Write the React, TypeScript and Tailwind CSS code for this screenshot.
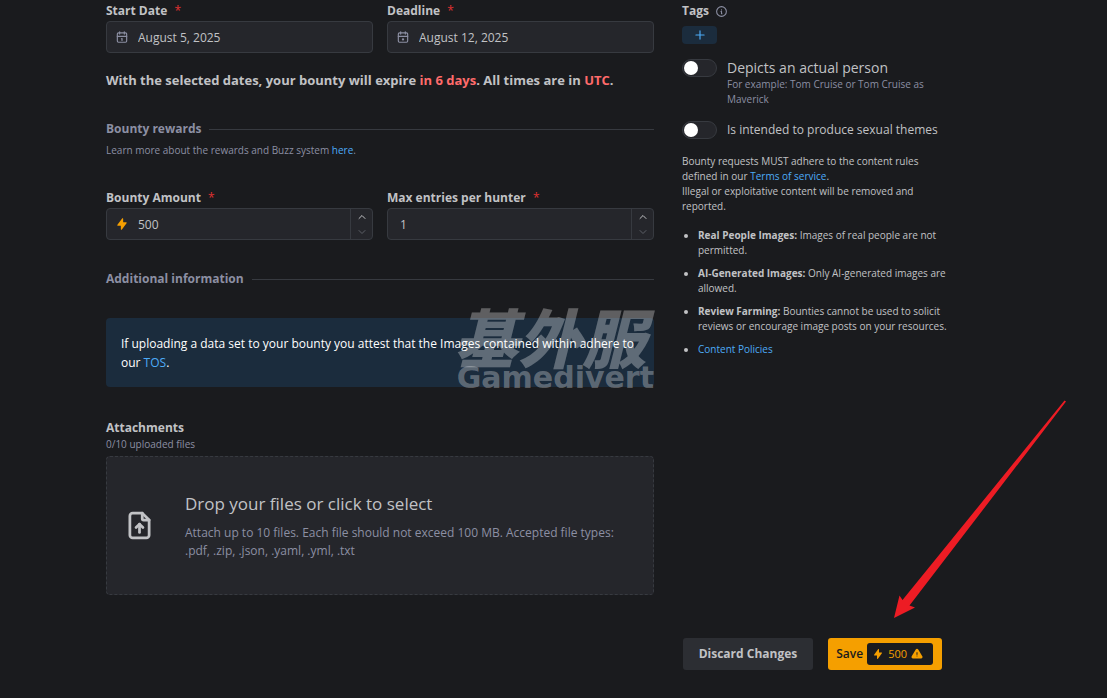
import type { ReactNode } from "react";
import {
  TbAlertTriangleFilled,
  TbBoltFilled,
  TbCalendar,
  TbCalendarDue,
  TbChevronDown,
  TbChevronUp,
  TbFileUpload,
  TbInfoCircle,
  TbPlus,
} from "react-icons/tb";

const rules = [
  {
    title: "Real People Images:",
    text: "Images of real people are not permitted.",
  },
  {
    title: "AI-Generated Images:",
    text: "Only AI-generated images are allowed.",
  },
  {
    title: "Review Farming:",
    text: "Bounties cannot be used to solicit reviews or encourage image posts on your resources.",
  },
];

interface FieldProps {
  id: string;
  label: string;
  value: string;
  icon?: ReactNode;
  stepper?: boolean;
}

const Field = ({ id, label, value, icon, stepper }: FieldProps) => {
  return (
    <div className="min-w-0 flex-1">
      <label htmlFor={id} className="block text-xs leading-5 font-bold">
        {label} <span className="ml-1 font-normal text-[#e03131]">*</span>
      </label>
      <div className="flex h-8 overflow-hidden rounded border border-[#373a40] bg-[#25262b]">
        {icon && (
          <span className="flex w-[31px] items-center justify-center pr-px text-[#8c8fa3]">
            {icon}
          </span>
        )}
        <input
          id={id}
          type="text"
          defaultValue={value}
          className={`min-w-0 flex-1 bg-transparent pt-px text-xs outline-none ${
            icon ? "" : "pl-3"
          }`}
        />
        {stepper && (
          <div className="flex w-[22px] flex-col border-l border-[#373a40]">
            <button
              type="button"
              aria-label={`Increase ${label}`}
              className="flex flex-1 items-center justify-center">
              <TbChevronUp size={12} />
            </button>
            <button
              type="button"
              aria-label={`Decrease ${label}`}
              className="flex flex-1 items-center justify-center text-[#5c5f66]">
              <TbChevronDown size={12} />
            </button>
          </div>
        )}
      </div>
    </div>
  );
};

const Divider = ({ label }: { label: string }) => {
  return (
    <div className="flex items-center gap-2">
      <h2 className="text-xs leading-5 font-bold text-[#8c8fa3]">{label}</h2>
      <div className="h-px flex-1 bg-[#373a40]" />
    </div>
  );
};

interface ToggleProps {
  id: string;
  label: string;
  description?: string;
}

const Toggle = ({ id, label, description }: ToggleProps) => {
  return (
    <div className="flex gap-[10px]">
      <input
        id={id}
        type="checkbox"
        role="switch"
        className="h-[18px] w-[35px] shrink-0 appearance-none rounded-full border border-[#373a40] bg-[#25262b] before:ml-px before:mt-px before:block before:size-[14px] before:rounded-full before:bg-white checked:before:ml-[18px]"
      />
      <div>
        <label
          htmlFor={id}
          className={`block leading-[18px] ${
            description ? "text-sm" : "text-xs"
          }`}>
          {label}
        </label>
        {description && (
          <p className="text-[10px] leading-[15px] text-[#8c8fa3]">
            {description}
          </p>
        )}
      </div>
    </div>
  );
};

const Watermark = () => {
  return (
    <div
      aria-hidden="true"
      className="pointer-events-none absolute -top-2.5 right-0 text-right text-white/30">
      <p className="pr-2 font-['Noto_Sans_CJK_SC',sans-serif] text-[64px] leading-[54px] font-black italic">
        基外服
      </p>
      <p className="font-['DejaVu_Sans',sans-serif] text-[30px] leading-8 font-bold">
        Gamedivert
      </p>
    </div>
  );
};

const BountyForm = () => {
  return (
    <section className="min-w-0 flex-1">
      <div className="flex gap-[14px]">
        <Field
          id="start"
          label="Start Date"
          value="August 5, 2025"
          icon={<TbCalendar size={14} />}
        />
        <Field
          id="deadline"
          label="Deadline"
          value="August 12, 2025"
          icon={<TbCalendarDue size={14} />}
        />
      </div>

      <p className="mt-4 text-[13px] leading-[22px] font-bold">
        With the selected dates, your bounty will expire{" "}
        <span className="text-[#ff6b6b]">in 6 days</span>. All times are in{" "}
        <span className="text-[#ff6b6b]">UTC</span>.
      </p>

      <div className="mt-7">
        <Divider label="Bounty rewards" />
        <p className="mt-[3px] text-[10px] leading-4 text-[#8c8fa3]">
          Learn more about the rewards and Buzz system{" "}
          <a href="#buzz" className="text-[#4dabf7]">
            here
          </a>
          .
        </p>
      </div>

      <div className="mt-[30px] flex gap-[14px]">
        <Field
          id="amount"
          label="Bounty Amount"
          value="500"
          icon={<TbBoltFilled size={14} className="text-[#f59f00]" />}
          stepper
        />
        <Field
          id="entries"
          label="Max entries per hunter"
          value="1"
          stepper
        />
      </div>

      <div className="mt-[29px]">
        <Divider label="Additional information" />
      </div>

      <div className="relative mt-[29px] rounded bg-[#1b2c3d] px-[15px] pt-4 pb-[15px] text-white">
        <p className="text-xs leading-[19px]">
          If uploading a data set to your bounty you attest that the Images
          contained within adhere to our{" "}
          <a href="#tos" className="text-[#4dabf7]">
            TOS
          </a>
          .
        </p>
        <Watermark />
      </div>

      <div className="mt-[31px]">
        <h3 className="text-xs leading-5 font-bold">Attachments</h3>
        <p className="text-[10px] leading-3 text-[#8c8fa3]">
          0/10 uploaded files
        </p>
        <button
          type="button"
          className="mt-1.5 flex w-full items-center gap-[29px] rounded border border-dashed border-[#373a40] bg-[#25262b] py-[34px] pr-6 pl-4 text-left">
          <TbFileUpload size={33} className="shrink-0" />
          <span className="block">
            <span className="block text-[17px] leading-[26px]">
              Drop your files or click to select
            </span>
            <span className="mt-[7px] block text-xs leading-[18px] text-[#8c8fa3]">
              Attach up to 10 files. Each file should not exceed 100 MB.
              Accepted file types: .pdf, .zip, .json, .yaml, .yml, .txt
            </span>
          </span>
        </button>
      </div>
    </section>
  );
};

const Sidebar = () => {
  return (
    <aside className="w-[276px] shrink-0">
      <div className="flex items-center gap-1.5">
        <h3 className="text-xs leading-5 font-bold">Tags</h3>
        <TbInfoCircle size={13} className="text-[#8c8fa3]" />
      </div>
      <button
        type="button"
        aria-label="Add tag"
        className="mt-[5px] flex h-[18px] w-[35px] items-center justify-center rounded bg-[#1b2c3d] text-[#4dabf7]">
        <TbPlus size={14} />
      </button>

      <div className="mt-[15px] flex flex-col gap-[14px]">
        <Toggle
          id="person"
          label="Depicts an actual person"
          description="For example: Tom Cruise or Tom Cruise as Maverick"
        />
        <Toggle id="themes" label="Is intended to produce sexual themes" />
      </div>

      <div className="mt-[15px] text-[10px] leading-[15px]">
        <p className="pr-6">
          Bounty requests MUST adhere to the content rules defined in our{" "}
          <a href="#terms" className="text-[#4dabf7]">
            Terms of service
          </a>
          .
          <br />
          Illegal or exploitative content will be removed and reported.
        </p>
        <ul className="mt-3.5 flex list-disc flex-col gap-2 pl-4">
          {rules.map((rule) => (
            <li key={rule.title}>
              <strong className="font-bold">{rule.title}</strong> {rule.text}
            </li>
          ))}
          <li>
            <a href="#policies" className="text-[#4dabf7]">
              Content Policies
            </a>
          </li>
        </ul>
      </div>
    </aside>
  );
};

const Arrow = () => {
  return (
    <svg
      viewBox="0 0 173 219"
      aria-hidden="true"
      className="pointer-events-none absolute right-[-109px] bottom-[51px] h-[219px] w-[173px] fill-[#ed1c24]">
      <path d="M0 218 5.500 195.500 8.500 200 170.500 0.500 172 1.500 15.500 205.500 21 207.500Z" />
    </svg>
  );
};

export default function App() {
  return (
    <div className="min-h-screen bg-[#1a1b1e] font-['Open_Sans',sans-serif] text-[#c1c2c5]">
      <main className="mx-auto w-full max-w-[1107px] overflow-hidden pt-px pr-[149px] pb-7 pl-[106px]">
        <div className="flex gap-7">
          <BountyForm />
          <Sidebar />
        </div>
        <div className="relative mt-[43px] flex justify-end gap-[15px] pr-4">
          <button
            type="button"
            className="h-8 rounded-[3px] bg-[#2c2e33] px-4 text-xs font-bold">
            Discard Changes
          </button>
          <button
            type="button"
            className="flex h-8 items-center gap-1 rounded-[3px] bg-[#f59f00] pr-[9px] pl-2 text-xs font-semibold text-[#1a1b1e]">
            Save
            <span className="flex h-[22px] items-center gap-1 rounded-[3px] bg-[#1a1b1e] px-[5px] pr-2.5 text-[11px] font-medium text-[#f59f00]">
              <TbBoltFilled size={12} />
              500
              <TbAlertTriangleFilled size={12} />
            </span>
          </button>
          <Arrow />
        </div>
      </main>
    </div>
  );
}
